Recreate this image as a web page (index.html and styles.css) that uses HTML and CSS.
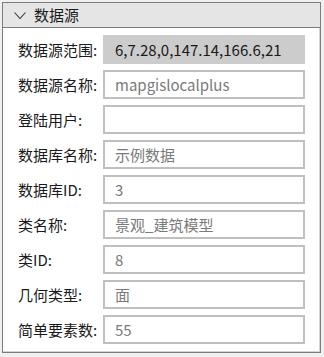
FILE: index.html
```html
<!DOCTYPE html>
<html lang="zh">
<head>
<meta charset="utf-8">
<link rel="stylesheet" href="styles.css">
</head>
<body>
<div class="panel">
  <div class="header">
    <svg class="chev" width="12" height="8" viewBox="0 0 12 8"><polyline points="0.5,0.5 6,6.5 11.5,0.5" fill="none" stroke="#333" stroke-width="1.1"/></svg>
    <span class="title">数据源</span>
  </div>
  <div class="body">
    <div class="form">
      <label>数据源范围:</label><div class="field range">6,7.28,0,147.14,166.6,21</div>
      <label>数据源名称:</label><div class="field">mapgislocalplus</div>
      <label>登陆用户:</label><div class="field"></div>
      <label>数据库名称:</label><div class="field">示例数据</div>
      <label>数据库ID:</label><div class="field">3</div>
      <label>类名称:</label><div class="field">景观_建筑模型</div>
      <label>类ID:</label><div class="field">8</div>
      <label>几何类型:</label><div class="field">面</div>
      <label>简单要素数:</label><div class="field">55</div>
    </div>
  </div>
</div>
</body>
</html>
```
FILE: styles.css
```css
html, body { margin: 0; padding: 0; background: #f0f0f0; }
body { font-family: "Noto Sans CJK SC", "Noto Sans", sans-serif; font-size: 15px; color: #1a1a1a; }
.panel {
  margin: 2px 0 0 2px;
  width: 319px;
  height: 351px;
  box-sizing: border-box;
  border: 1px solid #7c7c7c;
  background: #fff;
  display: flex;
  flex-direction: column;
}
.header {
  height: 24px;
  background: #e5e5e5;
  border-bottom: 1px solid #7c7c7c;
  display: flex;
  align-items: center;
  padding-left: 11px;
  gap: 8px;
}
.chev { display: block; margin-top: 1px; }
.title { line-height: 24px; }
.body {
  flex: 1;
  box-shadow: inset -1px -1px 0 #d4d4d4;
  padding: 7px 0 0 15px;
}
.form {
  display: grid;
  grid-template-columns: 85px 202px;
  grid-auto-rows: 29px;
  row-gap: 6px;
  align-items: center;
}
.form label { line-height: 29px; white-space: nowrap; }
.field {
  box-sizing: border-box;
  height: 29px;
  border: 2px solid #c0c0c0;
  padding-left: 10px;
  line-height: 25px;
  color: #7a7a7a;
  white-space: nowrap;
  overflow: hidden;
}
.field.range {
  background: #cccccc;
  border-color: #cccccc;
  color: #1a1a1a;
}
```
